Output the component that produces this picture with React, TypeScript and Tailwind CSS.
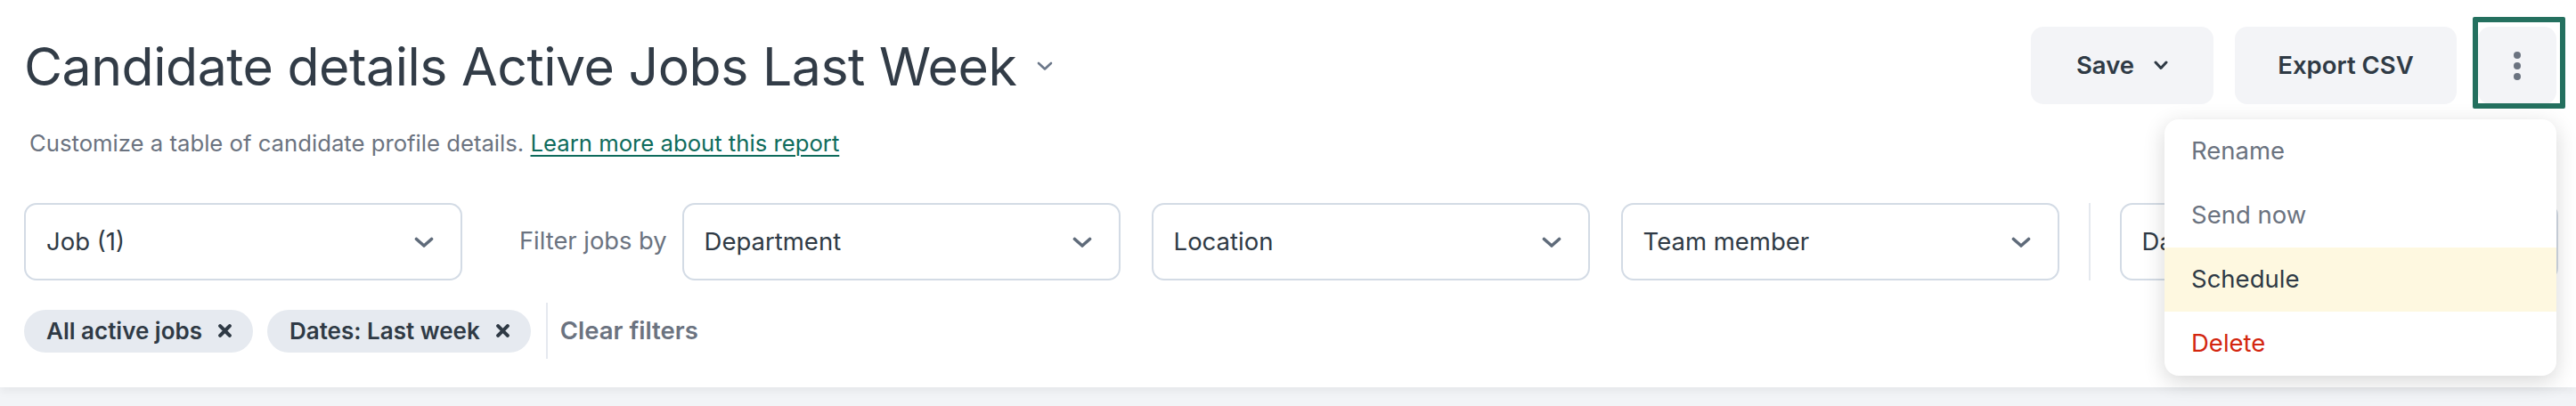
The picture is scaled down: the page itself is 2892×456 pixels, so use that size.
import React from "react";

const Chevron = ({ className }: { className?: string }) => (
  <svg viewBox="0 0 22 12" className={className} fill="none">
    <path d="M2.5 2.5 L11 10 L19.5 2.5" stroke="currentColor" strokeWidth="3.6" strokeLinecap="round" strokeLinejoin="round" />
  </svg>
);

const CloseX = () => (
  <svg viewBox="0 0 14 14" className="w-[15px] h-[15px] text-[#2f3a45]" fill="none">
    <path d="M2 2 L12 12 M12 2 L2 12" stroke="currentColor" strokeWidth="3.8" strokeLinecap="round" />
  </svg>
);

const Select = ({ label }: { label: string }) => (
  <div className="w-[492px] h-[87px] shrink-0 flex items-center justify-between pl-[23px] pr-[30px] border-2 border-[#d3dbe5] rounded-[14px] bg-white">
    <span className="text-[27.5px] text-[#2f3a45] whitespace-nowrap">{label}</span>
    <Chevron className="w-[22px] h-[12px] text-[#5f6b7a]" />
  </div>
);

const Chip = ({ label }: { label: string }) => (
  <div className="h-[48px] flex items-center gap-[18px] pl-[25px] pr-[24px] rounded-full bg-[#e6eaf0]">
    <span className="text-[26px] font-semibold text-[#2f3a45] whitespace-nowrap">{label}</span>
    <CloseX />
  </div>
);

const menuItems = [
  { label: "Rename", cls: "text-[#6b7380]" },
  { label: "Send now", cls: "text-[#6b7380]" },
  { label: "Schedule", cls: "text-[#2f3a45] bg-[#fef8e0]" },
  { label: "Delete", cls: "text-[#d3260f]" },
];

export default function App() {
  return (
    <div className="w-[2892px] h-[456px] bg-[#f2f4f7] overflow-hidden font-['Inter',sans-serif]">
      <div className="h-[435px] bg-white shadow-[0_4px_10px_rgba(0,0,0,0.06)] pl-[27px] pr-[22px] pt-[30px]">
        <div className="flex items-center justify-between">
          <div className="flex items-center gap-[23px] pt-[2px]">
            <h1 className="text-[59px] leading-[72px] text-[#323c47] tracking-[-0.5px]">
              Candidate details Active Jobs Last Week
            </h1>
            <svg viewBox="0 0 18 11" className="w-[18px] h-[11px] text-[#6b7789]" fill="none">
              <path d="M2 2 L9 8.5 L16 2" stroke="currentColor" strokeWidth="2.6" strokeLinecap="round" strokeLinejoin="round" />
            </svg>
          </div>
          <div className="flex items-center gap-[24px]">
            <button className="w-[205px] h-[87px] rounded-[14px] bg-[#f3f4f7] flex items-center justify-center gap-[22px] text-[27.5px] font-semibold text-[#2f3a45]">
              Save
              <svg viewBox="0 0 16 11" className="w-[16px] h-[11px]" fill="none">
                <path d="M2 2 L8 8.5 L14 2" stroke="currentColor" strokeWidth="3" strokeLinecap="round" strokeLinejoin="round" />
              </svg>
            </button>
            <button className="w-[249px] h-[87px] rounded-[14px] bg-[#f3f4f7] flex items-center justify-center text-[27.5px] font-semibold text-[#2f3a45]">
              Export CSV
            </button>
            <div className="relative">
              <button className="w-[88px] h-[87px] rounded-[14px] bg-[#f3f4f7] flex flex-col items-center justify-center gap-[4px]">
                <span className="w-[8px] h-[8px] rounded-full bg-[#6b7380]" />
                <span className="w-[8px] h-[8px] rounded-full bg-[#6b7380]" />
                <span className="w-[8px] h-[8px] rounded-full bg-[#6b7380]" />
              </button>
              <span className="absolute -left-[6px] -top-[11px] w-[104px] h-[103px] border-[6px] border-[#24705f] rounded-[2px] pointer-events-none" />
              <div className="absolute right-0 top-[104px] w-[440px] rounded-[16px] bg-white overflow-hidden shadow-[0_6px_24px_rgba(0,0,0,0.16)] z-10">
                {menuItems.map((item) => (
                  <div key={item.label} className={`h-[72px] flex items-center pl-[30px] text-[27.5px] ${item.cls}`}>
                    {item.label}
                  </div>
                ))}
              </div>
            </div>
          </div>
        </div>

        <p className="mt-[28px] ml-[6px] text-[25.7px] leading-[32px] text-[#6b7380]">
          Customize a table of candidate profile details.{" "}
          <a href="#" className="text-[#0e6b5c] underline underline-offset-[4px] decoration-[2px]">
            Learn more about this report
          </a>
        </p>

        <div className="mt-[51px] flex items-center">
          <Select label="Job (1)" />
          <span className="shrink-0 whitespace-nowrap ml-[64px] mr-[17px] text-[27.3px] text-[#6b7380]">Filter jobs by</span>
          <div className="shrink-0 flex items-center gap-[35px]">
            <Select label="Department" />
            <Select label="Location" />
            <Select label="Team member" />
          </div>
          <div className="shrink-0 mx-[33px] w-[2px] h-[87px] bg-[#e5e9ef]" />
          <Select label="Dates" />
        </div>

        <div className="mt-[25px] flex items-center">
          <div className="flex items-center gap-[16px]">
            <Chip label="All active jobs" />
            <Chip label="Dates: Last week" />
          </div>
          <div className="ml-[17px] mr-[14px] w-[2px] h-[63px] bg-[#e5e9ef]" />
          <span className="text-[27.5px] font-semibold text-[#6b7380]">Clear filters</span>
        </div>
      </div>
    </div>
  );
}
